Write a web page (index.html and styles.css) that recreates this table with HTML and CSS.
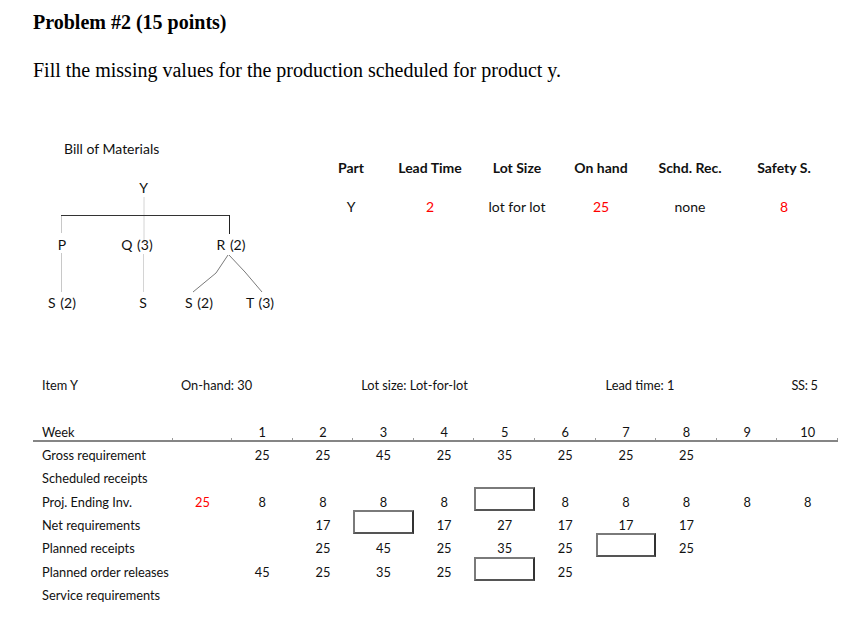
FILE: index.html
```html
<!DOCTYPE html>
<html lang="en">
<head>
<meta charset="utf-8">
<title>Problem #2</title>
<link rel="stylesheet" href="styles.css">
</head>
<body>
<div class="page">
  <h1 class="title">Problem #2 (15 points)</h1>
  <p class="prompt">Fill the missing values for the production scheduled for product y.</p>

  <section class="top">
    <div class="bom">
      <div class="bom-title">Bill of Materials</div>
      <svg class="bom-lines" width="278" height="180" viewBox="0 0 278 180">
        <line x1="111" y1="57" x2="111" y2="103" stroke="#d4d4d4" stroke-width="1"/>
        <line x1="28" y1="75.5" x2="197" y2="75.5" stroke="#333" stroke-width="1"/>
        <line x1="28.5" y1="76" x2="28.5" y2="93" stroke="#c8c8c8" stroke-width="1"/>
        <line x1="196.5" y1="75" x2="196.5" y2="94" stroke="#222" stroke-width="1"/>
        <line x1="28.5" y1="113" x2="28.5" y2="152" stroke="#c8c8c8" stroke-width="1"/>
        <line x1="110.5" y1="114" x2="110.5" y2="152" stroke="#d4d4d4" stroke-width="1"/>
        <polyline points="195,115 183,133 160,152" fill="none" stroke="#7a7a7a" stroke-width="1"/>
        <polyline points="196,115 212,132 229,152" fill="none" stroke="#7a7a7a" stroke-width="1"/>
      </svg>
      <span class="node n-y">Y</span>
      <span class="node n-p">P</span>
      <span class="node n-q">Q (3)</span>
      <span class="node n-r">R (2)</span>
      <span class="node n-s1">S (2)</span>
      <span class="node n-s2">S</span>
      <span class="node n-s3">S (2)</span>
      <span class="node n-t">T (3)</span>
    </div>

    <div class="parts">
      <div class="ph">Part</div>
      <div class="ph">Lead Time</div>
      <div class="ph">Lot Size</div>
      <div class="ph">On hand</div>
      <div class="ph">Schd. Rec.</div>
      <div class="ph">Safety S.</div>
      <div class="pv">Y</div>
      <div class="pv red">2</div>
      <div class="pv">lot for lot</div>
      <div class="pv red">25</div>
      <div class="pv">none</div>
      <div class="pv red">8</div>
    </div>
  </section>

  <table class="mrp">
    <colgroup>
      <col class="w-label">
      <col class="w-oh">
      <col class="w-wk"><col class="w-wk"><col class="w-wk"><col class="w-wk"><col class="w-wk">
      <col class="w-wk"><col class="w-wk"><col class="w-wk"><col class="w-wk"><col class="w-wk">
    </colgroup>
    <thead>
      <tr class="info">
        <td class="label">Item Y</td>
        <td colspan="3" class="info-cell">On-hand: 30</td>
        <td colspan="4" class="info-cell">Lot size: Lot-for-lot</td>
        <td colspan="3" class="info-cell lead">Lead time: 1</td>
        <td class="info-cell ss">SS: 5</td>
      </tr>
      <tr class="weeks">
        <td class="label">Week</td>
        <td></td>
        <td>1</td><td>2</td><td>3</td><td>4</td><td>5</td>
        <td>6</td><td>7</td><td>8</td><td>9</td><td>10</td>
      </tr>
    </thead>
    <tbody>
      <tr class="first">
        <td class="label">Gross requirement</td>
        <td></td>
        <td>25</td><td>25</td><td>45</td><td>25</td><td>35</td>
        <td>25</td><td>25</td><td>25</td><td></td><td></td>
      </tr>
      <tr>
        <td class="label">Scheduled receipts</td>
        <td></td>
        <td></td><td></td><td></td><td></td><td></td>
        <td></td><td></td><td></td><td></td><td></td>
      </tr>
      <tr>
        <td class="label">Proj. Ending Inv.</td>
        <td class="red">25</td>
        <td>8</td><td>8</td><td>8</td><td>8</td><td class="blank"><div class="answer"></div></td>
        <td>8</td><td>8</td><td>8</td><td>8</td><td>8</td>
      </tr>
      <tr>
        <td class="label">Net requirements</td>
        <td></td>
        <td></td><td>17</td><td class="blank"><div class="answer"></div></td><td>17</td><td>27</td>
        <td>17</td><td>17</td><td>17</td><td></td><td></td>
      </tr>
      <tr>
        <td class="label">Planned receipts</td>
        <td></td>
        <td></td><td>25</td><td>45</td><td>25</td><td>35</td>
        <td>25</td><td class="blank"><div class="answer"></div></td><td>25</td><td></td><td></td>
      </tr>
      <tr>
        <td class="label">Planned order releases</td>
        <td></td>
        <td>45</td><td>25</td><td>35</td><td>25</td><td class="blank"><div class="answer"></div></td>
        <td>25</td><td></td><td></td><td></td><td></td>
      </tr>
      <tr>
        <td class="label">Service requirements</td>
        <td></td>
        <td></td><td></td><td></td><td></td><td></td>
        <td></td><td></td><td></td><td></td><td></td>
      </tr>
    </tbody>
  </table>
</div>
</body>
</html>
```

FILE: styles.css
```css
html, body {
  margin: 0;
  padding: 0;
  background: #ffffff;
}

.page {
  padding: 10px 0 0 33px;
  color: #000;
}

.title {
  margin: 0;
  font-family: "Liberation Serif", "Times New Roman", serif;
  font-weight: bold;
  font-size: 20px;
  line-height: 24px;
}

.prompt {
  margin: 24px 0 0 0;
  font-family: "Liberation Serif", "Times New Roman", serif;
  font-size: 20px;
  line-height: 24px;
}

.top {
  display: flex;
  margin-top: 58px;
  height: 180px;
  font-family: Lato, "Open Sans", sans-serif;
  font-size: 14px;
  color: #111;
}

.bom {
  position: relative;
  width: 278px;
  height: 180px;
  flex: none;
}

.bom-title {
  padding-left: 31px;
  line-height: 16px;
  margin-top: 1px;
}

.bom-lines {
  position: absolute;
  left: 0;
  top: 0;
}

.node {
  position: absolute;
  line-height: 16px;
  white-space: nowrap;
  transform: translate(-50%, -50%);
  word-spacing: 1px;
}

.n-y { left: 110.5px; top: 48px; }
.n-p { left: 29px; top: 105px; }
.n-q { left: 104px; top: 105px; }
.n-r { left: 198px; top: 105px; }
.n-s1 { left: 29px; top: 163px; }
.n-s2 { left: 110px; top: 163px; }
.n-s3 { left: 166px; top: 163px; }
.n-t { left: 227px; top: 163px; }

.parts {
  display: grid;
  grid-template-columns: 80px 78px 96px 72px 106px 82px;
  grid-auto-rows: 16px;
  row-gap: 23px;
  align-content: start;
  margin-top: 20px;
  text-align: center;
  line-height: 16px;
}

.ph {
  font-weight: bold;
}

.red {
  color: #ff0000;
}

.mrp {
  margin-top: 53px;
  border-collapse: collapse;
  border-spacing: 0;
  table-layout: fixed;
  width: 805px;
  font-family: Lato, "Open Sans", sans-serif;
  font-size: 12.8px;
  color: #111;
}

.w-label { width: 140px; }
.w-oh { width: 59px; }
.w-wk { width: 60.6px; }

.mrp td {
  padding: 0;
  text-align: center;
  line-height: 23.33px;
  white-space: nowrap;
}

.mrp td.label {
  text-align: left;
  padding-left: 9px;
}

.info td {
  line-height: 24px;
}

.mrp td.info-cell {
  text-align: left;
  padding-left: 8px;
}

.mrp td.lead {
  padding-left: 10px;
}

.mrp td.ss {
  padding-left: 14px;
  letter-spacing: -0.3px;
}

.weeks td {
  height: 43px;
  vertical-align: bottom;
  line-height: 16px;
  border-bottom: 2px solid #858585;
  position: relative;
}

.weeks td::after {
  content: "";
  position: absolute;
  right: 0;
  bottom: 0;
  width: 1px;
  height: 2px;
  background: #9a9a9a;
}

.first td {
  padding-top: 2px;
}

.blank {
  position: relative;
}

.answer {
  position: absolute;
  left: 0;
  right: 0;
  top: -4px;
  height: 24px;
  box-sizing: border-box;
  border: 2px solid #7a7a7a;
  border-right-color: #333;
  border-bottom-color: #555;
}
```
